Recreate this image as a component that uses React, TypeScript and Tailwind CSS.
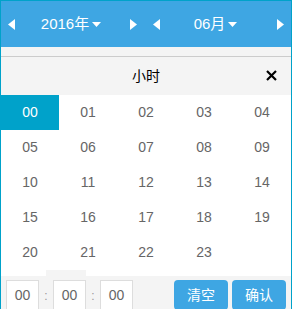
import React from "react";

const LeftTri = () => (
  <svg width="7" height="11" viewBox="0 0 7 11"><path d="M7 0 L0 5.5 L7 11 Z" fill="#fff" /></svg>
);
const RightTri = () => (
  <svg width="7" height="11" viewBox="0 0 7 11"><path d="M0 0 L7 5.5 L0 11 Z" fill="#fff" /></svg>
);
const Caret = () => (
  <svg width="9" height="5" viewBox="0 0 9 5"><path d="M0 0 L9 0 L4.5 5 Z" fill="#fff" /></svg>
);

const hours = Array.from({ length: 24 }, (_, i) => String(i).padStart(2, "0"));

export default function App() {
  const font = { fontFamily: '"Liberation Sans", Arial, "Noto Sans CJK SC", sans-serif' };
  return (
    <div className="w-[292px] h-[309px] overflow-hidden bg-white" style={font}>
      <div className="relative border-l border-t border-r border-[#00a2ca] h-[330px] flex flex-col">
        <div className="h-[46px] bg-[#3ea6e3] flex text-white text-[15px]">
          <div className="w-[145px] flex items-center justify-between pl-[7px] pr-[9px] pt-[1px]">
            <LeftTri />
            <div className="flex items-center gap-[3px] -ml-[3px]">
              <span>2016年</span>
              <Caret />
            </div>
            <RightTri />
          </div>
          <div className="flex-1 flex items-center justify-between pl-[7px] pr-[7px] pt-[1px]">
            <LeftTri />
            <div className="flex items-center gap-[3px] -ml-[6px]">
              <span>06月</span>
              <Caret />
            </div>
            <RightTri />
          </div>
        </div>
        <div className="h-[9px] bg-[#f4f4f4]" />
        <div className="h-[1px] bg-[#cccccc]" />
        <div className="h-[38px] bg-[#f4f4f4] flex items-center justify-center relative text-[14px] text-black">
          <span className="pt-[1px]">小时</span>
          <svg className="absolute right-[14px] top-[13px]" width="11" height="11" viewBox="0 0 11 11">
            <path d="M1 1 L10 10 M10 1 L1 10" stroke="#000" strokeWidth="2.2" />
          </svg>
        </div>
        <div className="grid grid-cols-5 text-[14px] text-[#666666]">
          {hours.map((h, i) => (
            <div
              key={h}
              className={
                i === 0
                  ? "h-[35px] flex items-center justify-center bg-[#00a2ca] text-white"
                  : "h-[35px] flex items-center justify-center"
              }
            >
              {h}
            </div>
          ))}
        </div>
        <div className="h-[6px] bg-white flex">
          <div className="w-[45px]" />
          <div className="w-[40px] bg-[#f4f4f4]" />
        </div>
        <div className="h-[40px] bg-[#f4f4f4] flex items-start pt-[4px] pl-[5px] pr-[5px] text-[14px]">
          <div className="flex items-center">
            <div className="w-[33px] h-[31px] bg-white border border-[#dddddd] flex items-center justify-center text-[#666666]">00</div>
            <span className="w-[14px] text-center text-[#999999] text-[12px]">:</span>
            <div className="w-[33px] h-[31px] bg-white border border-[#dddddd] flex items-center justify-center text-[#666666]">00</div>
            <span className="w-[14px] text-center text-[#999999] text-[12px]">:</span>
            <div className="w-[33px] h-[31px] bg-white border border-[#dddddd] flex items-center justify-center text-[#666666]">00</div>
          </div>
          <div className="ml-auto flex gap-[4px]">
            <button className="w-[54px] h-[30px] rounded-[4px] bg-[#3ea6e3] text-white text-[14px]">清空</button>
            <button className="w-[54px] h-[30px] rounded-[4px] bg-[#3ea6e3] text-white text-[14px]">确认</button>
          </div>
        </div>
      </div>
    </div>
  );
}
